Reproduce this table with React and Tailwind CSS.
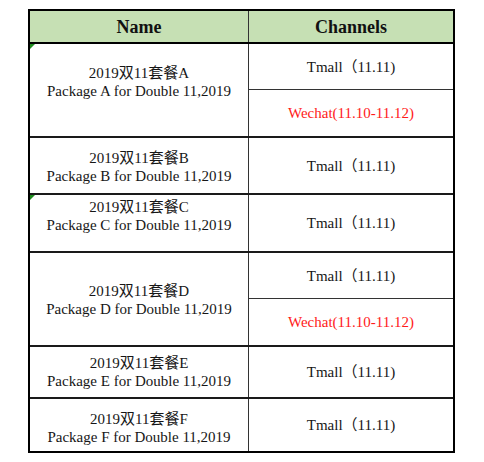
// Tabell: Double 11 paket och kanaler
const serif = { fontFamily: '"Liberation Serif", "Noto Sans CJK SC", serif' }

const rows = [
  { id: 'A', h: 'h-[92px]', pt: 'pt-[20px]', channels: ['Tmall', 'Wechat'], flag: true },
  { id: 'B', h: 'h-[55px]', pt: 'pt-[11px]', channels: ['Tmall'] },
  { id: 'C', h: 'h-[56px]', pt: 'pt-[3px]', channels: ['Tmall'], flag: true },
  { id: 'D', h: 'h-[92px]', pt: 'pt-[29px]', channels: ['Tmall', 'Wechat'] },
  { id: 'E', h: 'h-[50px]', pt: 'pt-[7px]', channels: ['Tmall'] },
  { id: 'F', h: 'h-[52px]', pt: 'pt-[11px]', channels: ['Tmall'], last: true },
]

function Channel({ kind }) {
  if (kind === 'Wechat') {
    return <span className="text-[#ff1a1a]">Wechat(11.10-11.12)</span>
  }
  return <span className="text-[#161616]">Tmall（11.11)</span>
}

export default function App() {
  return (
    <div className="w-[484px] h-[462px] bg-white pt-[9px] pl-[28px]" style={serif}>
      <div className="w-[427px] border-2 border-black">
        {/* rubrikrad */}
        <div className="flex h-[33px] bg-[#c6e0b4] border-b-2 border-black font-bold text-[18px] text-[#111]">
          <div className="w-[219px] border-r border-[#333] flex items-center justify-center pt-[2px]">Name</div>
          <div className="flex-1 flex items-center justify-center pt-[2px]">Channels</div>
        </div>

        {rows.map((r) => (
          <div
            key={r.id}
            className={`flex text-[15px] leading-[18px] ${r.h} ${r.last ? '' : 'border-b-2 border-[#1a1a1a]'}`}
            style={{ boxSizing: 'content-box' }}
          >
            <div className={`relative w-[219px] border-r border-[#333] text-center text-[#161616] ${r.pt}`}>
              {r.flag && (
                <div className="absolute left-0 top-0 w-[5px] h-[5px] bg-[#1e8c1e] [clip-path:polygon(0_0,100%_0,0_100%)]" />
              )}
              <div>2019双11套餐{r.id}</div>
              <div>Package {r.id} for Double 11,2019</div>
            </div>
            <div className="flex-1 flex flex-col">
              {r.channels.map((c, i) => (
                <div
                  key={c}
                  className={`flex items-center justify-center ${
                    r.channels.length > 1 ? (i === 0 ? 'h-[46px] border-b border-[#333]' : 'flex-1') : 'flex-1'
                  }`}
                >
                  <Channel kind={c} />
                </div>
              ))}
            </div>
          </div>
        ))}
      </div>
    </div>
  )
}
